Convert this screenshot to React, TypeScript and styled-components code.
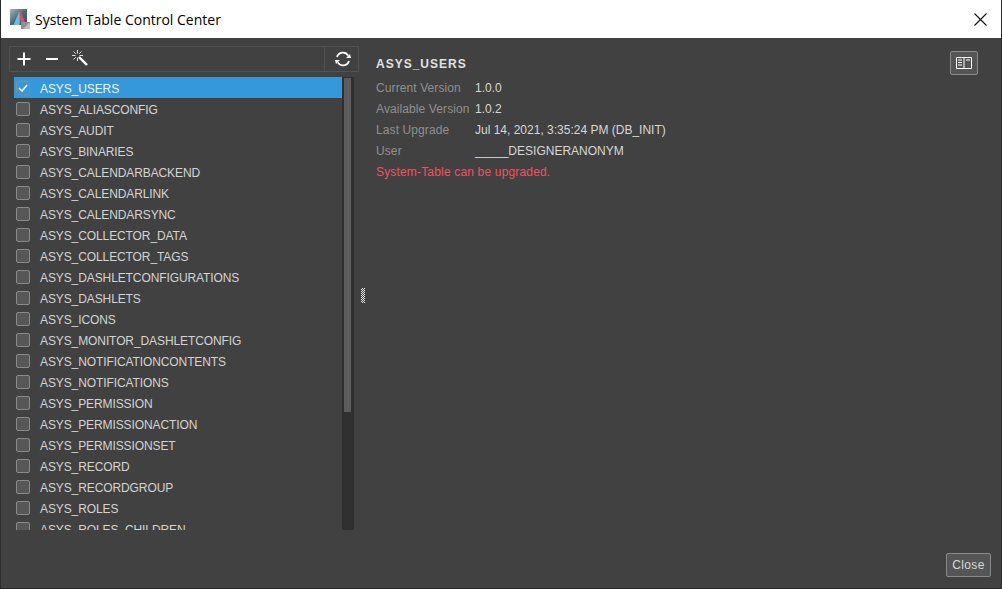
import * as React from "react";
import styled, { createGlobalStyle } from "styled-components";

const tables = [
  "ASYS_USERS",
  "ASYS_ALIASCONFIG",
  "ASYS_AUDIT",
  "ASYS_BINARIES",
  "ASYS_CALENDARBACKEND",
  "ASYS_CALENDARLINK",
  "ASYS_CALENDARSYNC",
  "ASYS_COLLECTOR_DATA",
  "ASYS_COLLECTOR_TAGS",
  "ASYS_DASHLETCONFIGURATIONS",
  "ASYS_DASHLETS",
  "ASYS_ICONS",
  "ASYS_MONITOR_DASHLETCONFIG",
  "ASYS_NOTIFICATIONCONTENTS",
  "ASYS_NOTIFICATIONS",
  "ASYS_PERMISSION",
  "ASYS_PERMISSIONACTION",
  "ASYS_PERMISSIONSET",
  "ASYS_RECORD",
  "ASYS_RECORDGROUP",
  "ASYS_ROLES",
  "ASYS_ROLES_CHILDREN",
];

const details = [
  { label: "Current Version", value: "1.0.0" },
  { label: "Available Version", value: "1.0.2" },
  { label: "Last Upgrade", value: "Jul 14, 2021, 3:35:24 PM (DB_INIT)" },
  { label: "User", value: "_____DESIGNERANONYM" },
];

export default function App() {
  return (
    <>
      <GlobalStyle />
      <Dialog>
        <TitleBar>
          <AppIcon viewBox="0 0 20 20">
            <defs>
              <linearGradient id="iconBg" x1="0" y1="0" x2="1" y2="1">
                <stop offset="0" stopColor="#a9b4ba" />
                <stop offset="0.5" stopColor="#4d6a7a" />
                <stop offset="1" stopColor="#37505e" />
              </linearGradient>
            </defs>
            <rect x="0" y="0" width="17" height="16" fill="url(#iconBg)" />
            <path d="M3.5 16 L9 3 L10.5 3 L9.5 16 Z" fill="#62c4dc" />
            <path d="M9.5 3 L11 3 L16 16 L11.5 16 L10.5 11 L9.5 11 Z" fill="#e5486a" />
            <rect x="11" y="13" width="9" height="7" fill="#8f8f8f" />
            <path d="M13 20 L20 13 V20 Z" fill="#bdbdbd" />
          </AppIcon>
          <TitleText>System Table Control Center</TitleText>
          <CloseX viewBox="0 0 13 13">
            <path d="M0.5 0.5 L12.5 12.5 M12.5 0.5 L0.5 12.5" stroke="#111" strokeWidth="1.1" fill="none" />
          </CloseX>
        </TitleBar>
        <Body>
          <Main>
            <LeftPane>
              <Toolbar>
                <ToolGroup>
                  <ToolIcon viewBox="0 0 14 14">
                    <path d="M7 0.5 V13.5 M0.5 7 H13.5" stroke="#fff" strokeWidth="2" fill="none" />
                  </ToolIcon>
                  <MinusIcon viewBox="0 0 12 14">
                    <path d="M0 7 H12" stroke="#fff" strokeWidth="2" fill="none" />
                  </MinusIcon>
                  <WandIcon viewBox="0 0 16 16">
                    <path d="M7 7 L15 15" stroke="#fff" strokeWidth="2.4" fill="none" />
                    <path
                      d="M5.5 0 V3.5 M5.5 7.5 V11 M0 5.5 H3.5 M7.5 5.5 H11 M1.5 1.5 L3.8 3.8 M9.5 1.5 L7.2 3.8 M1.5 9.5 L3.8 7.2"
                      stroke="#ddd"
                      strokeWidth="1"
                      fill="none"
                    />
                  </WandIcon>
                </ToolGroup>
                <RefreshButton>
                  <RefreshIcon viewBox="0 0 16 16">
                    <path
                      d="M2 6 A6.2 6.2 0 0 1 13.2 4.6 M14 10 A6.2 6.2 0 0 1 2.8 11.4"
                      stroke="#fff"
                      strokeWidth="1.8"
                      fill="none"
                    />
                    <path d="M16 7 L11 7 L15 3 Z M0 9 L5 9 L1 13 Z" fill="#fff" />
                  </RefreshIcon>
                </RefreshButton>
              </Toolbar>
              <ListArea>
                <List>
                  {tables.map((name, i) => (
                    <Row key={name} $selected={i === 0}>
                      <Check $selected={i === 0}>
                        {i === 0 && (
                          <svg width="10" height="8" viewBox="0 0 10 8">
                            <path d="M1 4 L4 7 L9 1" stroke="#fff" strokeWidth="1.6" fill="none" />
                          </svg>
                        )}
                      </Check>
                      {name}
                    </Row>
                  ))}
                </List>
                <ScrollTrack>
                  <ScrollThumb />
                </ScrollTrack>
              </ListArea>
            </LeftPane>
            <Splitter>
              <Grip />
            </Splitter>
            <DetailPane>
              <DetailHeader>
                <DetailTitle>ASYS_USERS</DetailTitle>
                <BookButton>
                  <svg width="16" height="12" viewBox="0 0 16 12">
                    <path d="M0.5 0.5 H15.5 V11.5 H0.5 Z M8 0.5 V11.5" stroke="#fff" fill="none" />
                    <path d="M2 3 H6 M2 5.5 H6 M2 8 H6 M10 3 H14" stroke="#fff" fill="none" />
                  </svg>
                </BookButton>
              </DetailHeader>
              {details.map(d => (
                <DetailRow key={d.label}>
                  <DetailLabel>{d.label}</DetailLabel>
                  <span>{d.value}</span>
                </DetailRow>
              ))}
              <Warning>System-Table can be upgraded.</Warning>
            </DetailPane>
          </Main>
          <Footer>
            <CloseButton>Close</CloseButton>
          </Footer>
        </Body>
      </Dialog>
    </>
  );
}

const GlobalStyle = createGlobalStyle`
  html, body {
    margin: 0;
    padding: 0;
    background: #414141;
  }
`;

const Dialog = styled.div`
  width: 1002px;
  height: 589px;
  box-sizing: border-box;
  border: 1px solid #2c2c2c;
  border-top: none;
  display: flex;
  flex-direction: column;
  overflow: hidden;
  font-family: "Liberation Sans", Arial, sans-serif;
  font-size: 12px;
  color: #d8d8d8;
`;

const TitleBar = styled.div`
  height: 38px;
  flex: none;
  background: #fff;
  display: flex;
  align-items: center;
  padding: 0 14px 0 9px;
`;

const AppIcon = styled.svg`
  width: 20px;
  height: 20px;
  flex: none;
`;

const TitleText = styled.div`
  margin-left: 5px;
  font-family: "Open Sans", "Noto Sans", sans-serif;
  font-size: 14px;
  color: #000;
  flex: 1;
`;

const CloseX = styled.svg`
  width: 13px;
  height: 13px;
`;

const Body = styled.div`
  flex: 1;
  background: #414141;
  display: flex;
  flex-direction: column;
  min-height: 0;
`;

const Main = styled.div`
  flex: 1;
  display: flex;
  min-height: 0;
  padding: 8px 0 0 8px;
`;

const LeftPane = styled.div`
  width: 350px;
  flex: none;
  display: flex;
  flex-direction: column;
`;

const Toolbar = styled.div`
  height: 26px;
  flex: none;
  display: flex;
  border: 1px solid #525252;
  box-sizing: border-box;
`;

const ToolGroup = styled.div`
  flex: 1;
  display: flex;
  align-items: center;
  padding-left: 7px;
  border-right: 1px solid #525252;
`;

const ToolIcon = styled.svg`
  width: 14px;
  height: 14px;
`;

const MinusIcon = styled.svg`
  width: 12px;
  height: 14px;
  margin-left: 15px;
`;

const WandIcon = styled.svg`
  width: 16px;
  height: 16px;
  margin: -3px 0 0 14px;
`;

const RefreshButton = styled.div`
  width: 33px;
  box-sizing: border-box;
  padding-left: 2px;
  display: flex;
  align-items: center;
  justify-content: center;
`;

const RefreshIcon = styled.svg`
  width: 16px;
  height: 16px;
`;

const ListArea = styled.div`
  margin-top: 5px;
  padding: 0 5px;
  height: 453px;
  display: flex;
  overflow: hidden;
`;

const List = styled.div`
  flex: 1;
  min-width: 0;
`;

const Row = styled.div<{ $selected: boolean }>`
  height: 21px;
  box-sizing: border-box;
  padding: 2px 0 0 2px;
  display: flex;
  align-items: center;
  font-size: 12px;
  letter-spacing: -0.1px;
  color: ${p => (p.$selected ? "#f2f2f2" : "#d4d4d4")};
  background: ${p => (p.$selected ? "#3498db" : "transparent")};
`;

const Check = styled.div<{ $selected: boolean }>`
  width: 14px;
  height: 14px;
  box-sizing: border-box;
  margin-right: 10px;
  margin-top: -2px;
  border: 1px solid #8a8a8a;
  border-radius: 2px;
  background: ${p => (p.$selected ? "#3498db" : "#575757")};
  display: flex;
  align-items: center;
  justify-content: center;
  flex: none;
`;

const ScrollTrack = styled.div`
  width: 12px;
  flex: none;
  background: #303030;
  padding: 1px 3px 1px 2px;
  box-sizing: border-box;
`;

const ScrollThumb = styled.div`
  height: 334px;
  background: #5c5c5c;
`;

const Splitter = styled.div`
  width: 7px;
  flex: none;
  box-sizing: border-box;
  padding-top: 4px;
  display: flex;
  align-items: center;
  justify-content: center;
`;

const Grip = styled.div`
  width: 4px;
  height: 15px;
  background: repeating-conic-gradient(#e8e8e8 0 25%, #414141 0 50%) 0 0 / 2px 2px;
`;

const DetailPane = styled.div`
  flex: 1;
  padding: 0 23px 0 10px;
  min-width: 0;
`;

const DetailHeader = styled.div`
  height: 31px;
  box-sizing: border-box;
  padding-top: 2px;
  display: flex;
  align-items: center;
  justify-content: space-between;
`;

const DetailTitle = styled.div`
  margin-top: 2px;
  font-weight: bold;
  font-size: 12px;
  letter-spacing: 1px;
  color: #e2e2e2;
`;

const BookButton = styled.div`
  width: 28px;
  height: 24px;
  box-sizing: border-box;
  border: 1px solid #8a8a8a;
  border-radius: 2px;
  background: #555;
  display: flex;
  align-items: center;
  justify-content: center;
`;

const DetailRow = styled.div`
  height: 21px;
  display: flex;
  align-items: center;
  font-size: 12px;
  color: #d8d8d8;
`;

const DetailLabel = styled.span`
  width: 99px;
  flex: none;
  color: #909090;
  letter-spacing: 0.1px;
`;

const Warning = styled.div`
  height: 21px;
  display: flex;
  align-items: center;
  letter-spacing: 0.17px;
  color: #ec5560;
`;

const Footer = styled.div`
  height: 47px;
  flex: none;
  display: flex;
  justify-content: flex-end;
  align-items: flex-start;
  padding: 12px 10px 0 0;
  box-sizing: border-box;
`;

const CloseButton = styled.div`
  width: 45px;
  height: 24px;
  box-sizing: border-box;
  border: 1px solid #8a8a8a;
  border-radius: 2px;
  background: #555;
  display: flex;
  align-items: center;
  justify-content: center;
  letter-spacing: 0.4px;
  color: #d8d8d8;
`;
